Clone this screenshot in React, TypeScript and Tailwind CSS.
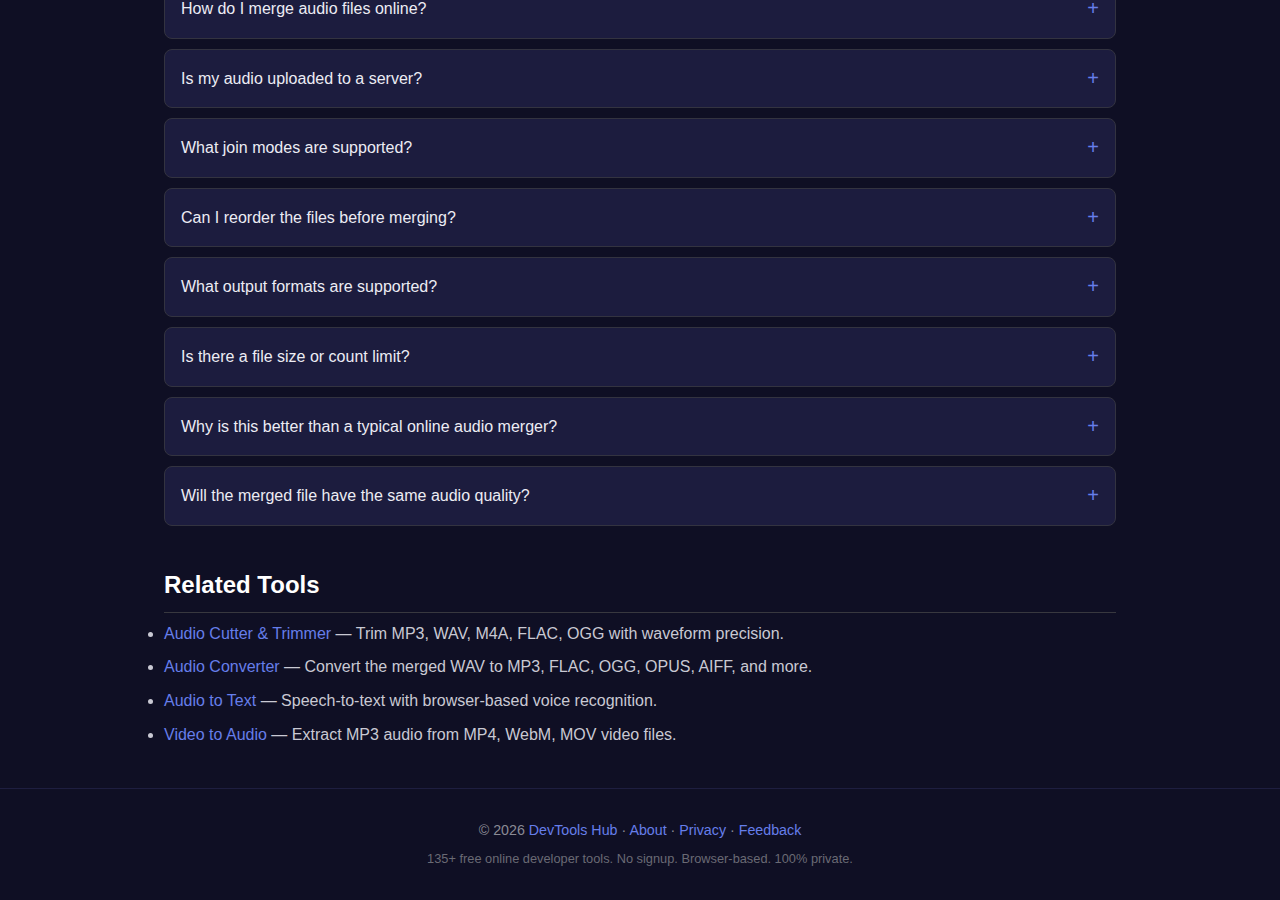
import React from 'react';

export default function App() {
  const faqs = [
    "How do I merge audio files online?",
    "Is my audio uploaded to a server?",
    "What join modes are supported?",
    "Can I reorder the files before merging?",
    "What output formats are supported?",
    "Is there a file size or count limit?",
    "Why is this better than a typical online audio merger?",
    "Will the merged file have the same audio quality?"
  ];

  const tools = [
    { name: "Audio Cutter & Trimmer", desc: "Trim MP3, WAV, M4A, FLAC, OGG with waveform precision." },
    { name: "Audio Converter", desc: "Convert the merged WAV to MP3, FLAC, OGG, OPUS, AIFF, and more." },
    { name: "Audio to Text", desc: "Speech-to-text with browser-based voice recognition." },
    { name: "Video to Audio", desc: "Extract MP3 audio from MP4, WebM, MOV video files." }
  ];

  return (
    <div className="min-h-[900px] bg-[#0f0f24] font-['Liberation_Sans',Arial,sans-serif] overflow-hidden">
      <main className="max-w-[952px] mx-auto -mt-[21px]">

        {/* FAQ accordion */}
        <div className="flex flex-col gap-[10px]">
          {faqs.map((q, idx) => (
            <div
              key={idx}
              className="flex items-center justify-between bg-[#1c1c3e] border border-[#333340] rounded-lg px-4 py-4 cursor-pointer"
            >
              <span className="text-[16px] leading-[25.6px] text-[#ececf4]">{q}</span>
              <span className="text-[20px] leading-[25.6px] text-[#667eea]">+</span>
            </div>
          ))}
        </div>

        {/* Related tools */}
        <section className="mt-[45px]">
          <h2 className="text-[24px] leading-[28.8px] font-bold text-white pb-3 border-b border-[#38383f]">
            Related Tools
          </h2>
          <ul className="list-disc mt-[8px] flex flex-col gap-[8px] text-[16px] leading-[25.8px] text-[#c9c9d3] marker:text-[#c9c9d3]">
            {tools.map((t, idx) => (
              <li key={idx}>
                <a href="#" className="text-[#667eea]">{t.name}</a> — {t.desc}
              </li>
            ))}
          </ul>
        </section>
      </main>

      {/* Footer */}
      <footer className="mt-[40px] border-t border-[#1e1e40] pt-[30px] pb-6 text-center">
        <p className="text-[14.25px] leading-[23px] text-[#8a8a94]">
          © 2026 <a href="#" className="text-[#667eea]">DevTools Hub</a> · <a href="#" className="text-[#667eea]">About</a> · <a href="#" className="text-[#667eea]">Privacy</a> · <a href="#" className="text-[#667eea]">Feedback</a>
        </p>
        <p className="mt-[7px] text-[12.8px] leading-[20px] text-[#6a6a74]">
          135+ free online developer tools. No signup. Browser-based. 100% private.
        </p>
      </footer>
    </div>
  );
}
